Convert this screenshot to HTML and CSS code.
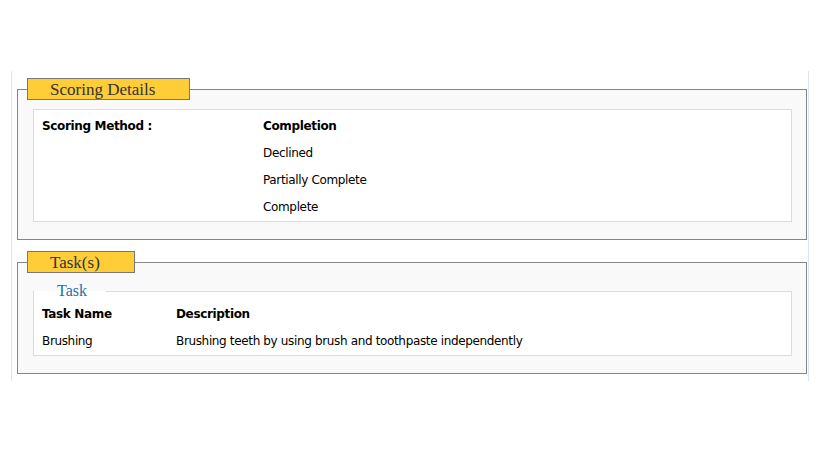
FILE: index.html
```html
<!DOCTYPE html>
<html>
  <head>
    <meta charset="UTF-8" />
    <title>Scoring Details</title>
    <link rel="stylesheet" href="styles.css">
  </head>
  <body>
    <div class="page">
      <!-- SCORING DETAILS -->
      <fieldset class="panel">
        <legend class="panel-title">Scoring Details</legend>
        <div class="box">
          <div class="row">
            <div class="label">Scoring Method :</div>
            <div class="value strong">Completion</div>
          </div>
          <div class="row">
            <div class="label"></div>
            <div class="value">Declined</div>
          </div>
          <div class="row">
            <div class="label"></div>
            <div class="value">Partially Complete</div>
          </div>
          <div class="row">
            <div class="label"></div>
            <div class="value">Complete</div>
          </div>
        </div>
      </fieldset>

      <!-- TASKS -->
      <fieldset class="panel panel-tasks">
        <legend class="panel-title">Task(s)</legend>
        <fieldset class="box task-box">
          <legend class="sub-title">Task</legend>
          <div class="row">
            <div class="task-name strong">Task Name</div>
            <div class="strong">Description</div>
          </div>
          <div class="row">
            <div class="task-name">Brushing</div>
            <div>Brushing teeth by using brush and toothpaste independently</div>
          </div>
        </fieldset>
      </fieldset>
    </div>
  </body>
</html>
```

FILE: styles.css
```css
body {
  margin: 0;
  font-family: "DejaVu Sans", Verdana, sans-serif;
  font-size: 12px;
  letter-spacing: -0.35px;
  color: #000;
  background: #fff;
}
.page {
  margin: 71px 12px 0 11px;
  padding: 7px 1px 7px 5px;
  border-left: 1px solid #dde5ec;
  border-right: 1px solid #dde5ec;
}
.panel {
  margin: 0;
  padding: 9px 14px 17px 15px;
  border: 1px solid #858585;
  background: #f9f9f9;
}
.panel-tasks {
  margin-top: 11px;
}
.panel-title {
  margin-left: -6px;
  padding: 0 34px 0 22px;
  height: 20px;
  line-height: 21px;
  border: 1px solid #777;
  background: #ffcd38;
  color: #333;
  font-family: "Liberation Serif", "Times New Roman", serif;
  font-size: 17px;
  letter-spacing: 0;
}
.box {
  margin: 0;
  padding: 3px 8px 0;
  border: 1px solid #dcdcdc;
  background: #fff;
}
.task-box {
  padding: 1px 8px 0;
}
.sub-title {
  margin-left: -8px;
  padding: 0 19px 0 23px;
  line-height: 18px;
  color: #1f6fa3;
  font-family: "Liberation Serif", "Times New Roman", serif;
  font-size: 16px;
  letter-spacing: 0;
}
.row {
  display: flex;
  height: 27px;
  line-height: 27px;
}
.label {
  width: 221px;
  font-weight: bold;
}
.task-name {
  width: 134px;
}
.strong {
  font-weight: bold;
}
```
